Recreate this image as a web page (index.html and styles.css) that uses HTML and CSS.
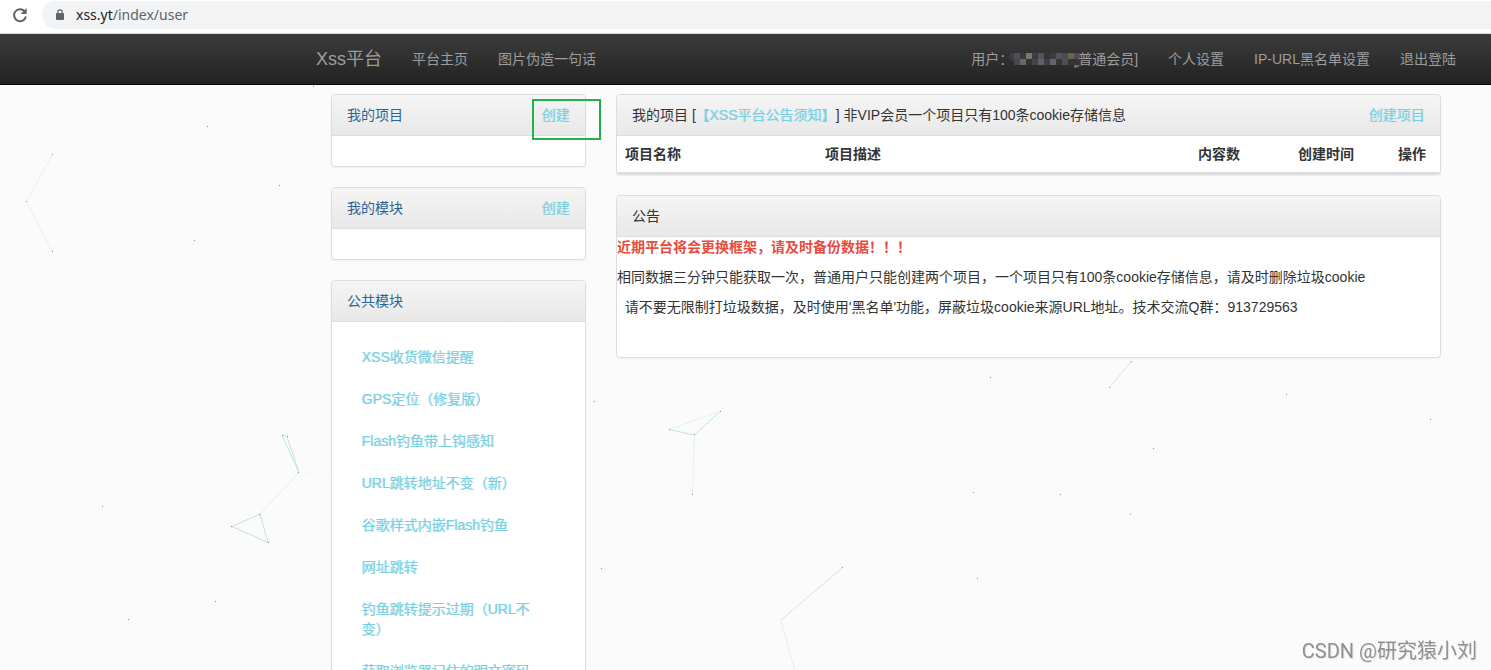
FILE: index.html
```
<!DOCTYPE html>
<html lang="zh-CN">
<head>
<meta charset="utf-8">
<meta name="viewport" content="width=device-width, initial-scale=1">
<title>Xss平台</title>
<link rel="stylesheet" href="styles.css">
</head>
<body>
<div class="browser-bar">
  <button class="reload" type="button" aria-label="重新加载">
    <svg width="16" height="16" viewBox="0 0 16 16"><path d="M12.6 4.2A6 6 0 1 0 13.9 9.6" fill="none" stroke="#5f6368" stroke-width="2"/><path d="M14.6 1v6H8.6z" fill="#5f6368"/></svg>
  </button>
  <div class="address">
    <svg class="lock" width="10" height="12" viewBox="0 0 10 12"><rect x="1" y="4" width="8" height="7" rx="1" fill="#5f6368"/><path d="M2.8 4.5V3a2.2 2.2 0 0 1 4.4 0v1.5" fill="none" stroke="#5f6368" stroke-width="1.2"/></svg>
    <span><span class="host">xss.yt</span>/index/user</span>
  </div>
</div>

<nav class="navbar">
  <div class="container navbar-inner">
    <a class="brand" href="#">Xss平台</a>
    <a class="nav-link" href="#">平台主页</a>
    <a class="nav-link" href="#">图片伪造一句话</a>
    <div class="nav-right">
      <a class="nav-link" href="#">用户：<svg class="mosaic" width="65" height="16" viewBox="0 0 65 16" aria-hidden="true"><path d="M1 0H-2Q-5 3-3 6L1 9z" fill="#3c3e42"/><path d="M1 0h6v6H1z" fill="#4c4f56"/><path d="M7 0h6v6H7z" fill="#39393b"/><path d="M13 0h6v6h-6z" fill="#7a776f"/><path d="M19 0h6v6h-6z" fill="#3b3c46"/><path d="M25 0h6v6h-6z" fill="#555557"/><path d="M31 0h6v6h-6z" fill="#353436"/><path d="M37 0h6v6h-6z" fill="#3a3c40"/><path d="M43 0h6v6h-6z" fill="#50555e"/><path d="M49 0h6v6h-6z" fill="#4a4c51"/><path d="M55 0h6v6h-6z" fill="#6b6259"/><path d="M61 0h6v6h-6z" fill="#514b49"/><path d="M1 6h6v6H1z" fill="#45484f"/><path d="M7 6h6v6H7z" fill="#66686b"/><path d="M13 6h6v6h-6z" fill="#333335"/><path d="M19 6h6v6h-6z" fill="#41434d"/><path d="M25 6h6v6h-6z" fill="#626162"/><path d="M31 6h6v6h-6z" fill="#344252"/><path d="M37 6h6v6h-6z" fill="#6a6463"/><path d="M43 6h6v6h-6z" fill="#393533"/><path d="M49 6h6v6h-6z" fill="#4b515b"/><path d="M55 6h6v6h-6z" fill="#373332"/><path d="M61 6h6v6h-6z" fill="#403133"/><path d="M61 12h6q-1 3-6 3z" fill="#696b6f"/></svg>普通会员]</a>
      <a class="nav-link" href="#">个人设置</a>
      <a class="nav-link" href="#">IP-URL黑名单设置</a>
      <a class="nav-link" href="#">退出登陆</a>
    </div>
  </div>
</nav>

<div class="page">
  <svg class="particles" width="1491" height="585" viewBox="0 85 1491 585" aria-hidden="true">
    <g fill="none" stroke="#dff3ea">
      <path d="M52.5 154L26.5 201.5L52.5 251.5" stroke="#e4f3ee"/>
      <path d="M282 435l5 1.5L299 472.5zM260 514l-28 12.5l36 16zM669 429.5l25.5 5.5l26-24" stroke="#bfe7d4"/>
      <path d="M299 472.5L260 514M669 429.5L720.5 411M694.5 435L692.5 494M781 620l14 52" stroke="#e2f2ec"/>
      <path d="M842 568L781 620M1131.5 361L1109 388" stroke="#c8eadc"/>
      <path d="M299 472.5l34 3M586 386l8 15M669 429.5l23.5 65M1153 448.5L1130.5 514" stroke="#f6f8f7"/>
    </g>
    <path fill="#8d9092" d="M52 154h1v1h-1zM26 201h1v1h-1zM52 251h1v1h-1zM207 126h1v1h-1zM279 185h1v1h-1zM194 240h1v1h-1zM313 86h1v1h-1zM102 506h1v1h-1zM215 601h1v1h-1zM128 619h1v1h-1zM282 435h1v1h-1zM287 436h1v1h-1zM298 472h1v1h-1zM259 514h1v1h-1zM231 526h1v1h-1zM268 542h1v1h-1zM594 401h1v1h-1zM601 568h1v1h-1zM669 429h1v1h-1zM720 411h1v1h-1zM694 434h1v1h-1zM692 494h1v1h-1zM842 567h1v1h-1zM990 377h1v1h-1zM1131 361h1v1h-1zM1109 387h1v1h-1zM1286 394h1v1h-1zM1430 419h1v1h-1zM1153 448h1v1h-1zM973 492h1v1h-1zM1060 494h1v1h-1zM1130 514h1v1h-1zM977 578h1v1h-1z"/>
  </svg>

  <div class="container row">
    <aside class="sidebar">
      <section class="panel">
        <h3 class="panel-heading"><a class="title-link" href="#">我的项目</a><a class="action" href="#">创建</a><span class="highlight"></span></h3>
        <div class="panel-body"></div>
      </section>
      <section class="panel">
        <h3 class="panel-heading"><a class="title-link" href="#">我的模块</a><a class="action" href="#">创建</a></h3>
        <div class="panel-body"></div>
      </section>
      <section class="panel">
        <h3 class="panel-heading"><a class="title-link" href="#">公共模块</a></h3>
        <ul class="panel-body module-list">
          <li><a href="#">XSS收货微信提醒</a></li>
          <li><a href="#">GPS定位（修复版）</a></li>
          <li><a href="#">Flash钓鱼带上钩感知</a></li>
          <li><a href="#">URL跳转地址不变（新）</a></li>
          <li><a href="#">谷歌样式内嵌Flash钓鱼</a></li>
          <li><a href="#">网址跳转</a></li>
          <li><a href="#">钓鱼跳转提示过期（URL不变）</a></li>
          <li><a href="#">获取浏览器记住的明文密码</a></li>
        </ul>
      </section>
    </aside>

    <main class="main">
      <section class="panel">
        <h3 class="panel-heading"><span>我的项目 [<a class="action" href="#">【XSS平台公告须知】</a>] 非VIP会员一个项目只有100条cookie存储信息</span><a class="action" href="#">创建项目</a></h3>
        <table class="projects">
          <thead>
            <tr><th class="col-name">项目名称</th><th>项目描述</th><th class="col-count">内容数</th><th class="col-count">创建时间</th><th class="col-ops">操作</th></tr>
          </thead>
        </table>
      </section>
      <section class="panel">
        <h3 class="panel-heading">公告</h3>
        <div class="notice">
          <p class="warning">近期平台将会更换框架，请及时备份数据！！！</p>
          <p>相同数据三分钟只能获取一次，普通用户只能创建两个项目，一个项目只有100条cookie存储信息，请及时删除垃圾cookie</p>
          <p>&nbsp;&nbsp;请不要无限制打垃圾数据，及时使用'黑名单'功能，屏蔽垃圾cookie来源URL地址。技术交流Q群：913729563</p>
          <p>&nbsp;</p>
        </div>
      </section>
    </main>
  </div>
</div>
<div class="watermark">CSDN @研究猿小刘</div>
</body>
</html>
```
FILE: styles.css
```
* {
  box-sizing: border-box;
}

body {
  margin: 0;
  height: 100vh;
  display: flex;
  flex-direction: column;
  overflow: hidden;
  background: #fbfbfb;
  color: #333;
  font: 14px/20px "Liberation Sans", "Noto Sans CJK SC", sans-serif;
  text-spacing-trim: space-all;
}

a {
  text-decoration: none;
}

.browser-bar {
  flex: none;
  display: flex;
  align-items: flex-start;
  gap: 14px;
  height: 34px;
  padding: 1px 0 0 12px;
  background: #fff;
  border-bottom: 1px solid #d5d8d5;
}

.reload {
  display: flex;
  align-items: center;
  width: 16px;
  height: 28px;
  padding: 0;
  border: 0;
  background: none;
}

.address {
  flex: 1;
  display: flex;
  align-items: center;
  gap: 11px;
  height: 28px;
  padding-left: 13px;
  border-radius: 14px 0 0 14px;
  background: #f1f3f4;
  color: #5f6368;
  font-family: "Noto Sans", sans-serif;
}

.host {
  color: #202124;
}

.container {
  margin: 0 20px 0 301px;
}

.navbar {
  flex: none;
  border-bottom: 1px solid #080808;
  background: linear-gradient(#3c3c3c, #222);
}

.navbar-inner {
  display: flex;
}

.brand,
.nav-link {
  padding: 15px;
  color: #9d9d9d;
  white-space: nowrap;
}

.brand {
  font-size: 18px;
}

.nav-right {
  display: flex;
  margin-left: auto;
}

.mosaic {
  vertical-align: -5px;
  overflow: visible;
}

.page {
  position: relative;
  flex: 1;
  min-height: 0;
}

.particles {
  position: absolute;
  top: 0;
  left: 0;
}

.row {
  position: relative;
  display: flex;
  padding: 9px 15px 0;
}

.sidebar,
.main {
  padding: 0 15px;
}

.sidebar {
  width: 25%;
}

.main {
  width: 75%;
}

.panel {
  margin-bottom: 20px;
  border: 1px solid #ddd;
  border-radius: 4px;
  background: #fff;
  box-shadow: 0 1px 2px rgba(0, 0, 0, 0.05);
}

.panel-heading {
  position: relative;
  display: flex;
  justify-content: space-between;
  margin: 0;
  padding: 10px 15px;
  border-bottom: 1px solid #ddd;
  border-radius: 3px 3px 0 0;
  background: linear-gradient(#f5f5f5, #e8e8e8);
  font-size: 14px;
  font-weight: 400;
}

.title-link {
  color: #2a6496;
}

.action,
.module-list a {
  color: #78cfe0;
  text-shadow: -1px 0 rgba(120, 207, 224, 0.5);
}

.highlight {
  position: absolute;
  top: 4px;
  right: -16px;
  width: 69px;
  height: 41px;
  border: 2px solid #22b14c;
}

.panel-body {
  margin: 0;
  padding: 15px;
}

.module-list {
  list-style: none;
}

.module-list li + li {
  margin-top: 2px;
}

.module-list a {
  display: block;
  padding: 10px 15px;
}

.projects {
  width: 100%;
  table-layout: fixed;
  border-collapse: separate;
  border-spacing: 0;
}

.projects th {
  padding: 8px;
  border-bottom: 2px solid #ddd;
  text-align: left;
}

.col-name {
  width: 200px;
}

.col-count {
  width: 100px;
}

.col-ops {
  width: 50px;
}

.notice p {
  margin: 0;
  padding-bottom: 10px;
}

.notice .warning {
  color: #e74c3c;
  font-weight: 700;
}

.watermark {
  position: fixed;
  right: 14px;
  bottom: 4px;
  color: #8f8f8f;
  font: 20px/30px Roboto, "Noto Sans CJK SC", sans-serif;
  text-shadow: 1px 1px #e4e4e4;
}
```
